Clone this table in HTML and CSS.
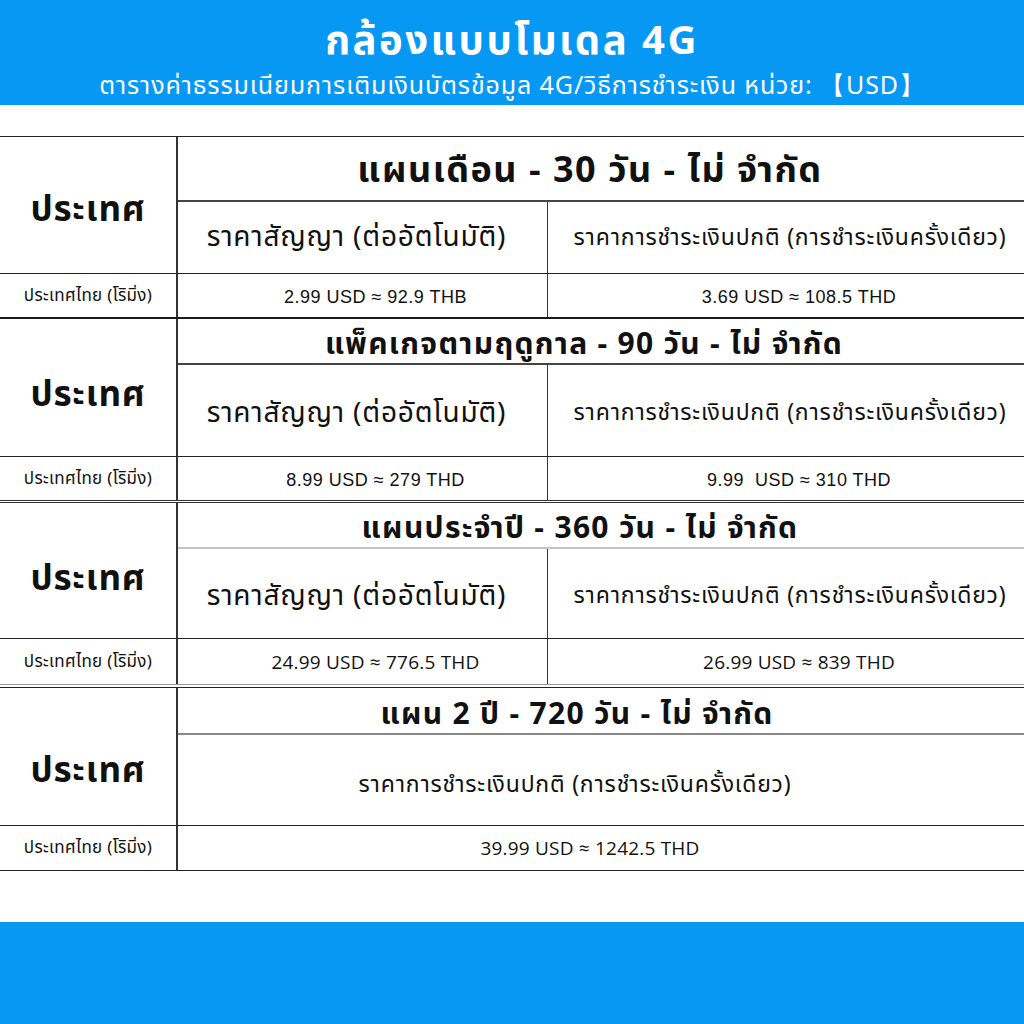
FILE: index.html
```html
<!DOCTYPE html>
<html lang="th">
<head>
<meta charset="utf-8">
<link rel="stylesheet" href="styles.css">
</head>
<body>
<header class="top">
  <h1 class="top-title">กล้องแบบโมเดล 4G</h1>
  <p class="top-sub">ตารางค่าธรรมเนียมการเติมเงินบัตรข้อมูล 4G/วิธีการชำระเงิน หน่วย: 【USD】</p>
</header>

<main class="tables">
  <section class="plan plan-1">
    <div class="country country-1">ประเทศ</div>
    <div class="title title-1">แผนเดือน - 30 วัน - ไม่ จำกัด</div>
    <div class="sub sub-a">ราคาสัญญา (ต่ออัตโนมัติ)</div>
    <div class="sub sub-b">ราคาการชำระเงินปกติ (การชำระเงินครั้งเดียว)</div>
    <div class="label">ประเทศไทย (โริมิ่ง)</div>
    <div class="price price-a">2.99 USD ≈ 92.9 THB</div>
    <div class="price">3.69 USD ≈ 108.5 THD</div>
  </section>

  <section class="plan plan-2">
    <div class="country country-2">ประเทศ</div>
    <div class="title title-2">แพ็คเกจตามฤดูกาล - 90 วัน - ไม่ จำกัด</div>
    <div class="sub sub-a sub-low">ราคาสัญญา (ต่ออัตโนมัติ)</div>
    <div class="sub sub-b sub-low">ราคาการชำระเงินปกติ (การชำระเงินครั้งเดียว)</div>
    <div class="label">ประเทศไทย (โริมิ่ง)</div>
    <div class="price price-a">8.99 USD ≈ 279 THD</div>
    <div class="price">9.99&nbsp; USD ≈ 310 THD</div>
  </section>

  <section class="plan plan-3">
    <div class="country country-3">ประเทศ</div>
    <div class="title title-3 title-light">แผนประจำปี - 360 วัน - ไม่ จำกัด</div>
    <div class="sub sub-a sub-low">ราคาสัญญา (ต่ออัตโนมัติ)</div>
    <div class="sub sub-b sub-low">ราคาการชำระเงินปกติ (การชำระเงินครั้งเดียว)</div>
    <div class="label">ประเทศไทย (โริมิ่ง)</div>
    <div class="price price-a price-alt">24.99 USD ≈ 776.5 THD</div>
    <div class="price price-alt">26.99 USD ≈ 839 THD</div>
  </section>

  <section class="plan plan-4">
    <div class="country country-4">ประเทศ</div>
    <div class="title title-4 title-mid">แผน 2 ปี - 720 วัน - ไม่ จำกัด</div>
    <div class="sub sub-wide">ราคาการชำระเงินปกติ (การชำระเงินครั้งเดียว)</div>
    <div class="label">ประเทศไทย (โริมิ่ง)</div>
    <div class="price price-wide price-alt">39.99 USD ≈ 1242.5 THD</div>
  </section>
</main>

<footer class="bottom"></footer>
</body>
</html>
```

FILE: styles.css
```css
* { box-sizing: border-box; }

html, body {
  margin: 0;
  padding: 0;
  background: #ffffff;
  width: 1024px;
  height: 1024px;
  overflow: hidden;
  font-family: "Noto Sans Thai", "Noto Sans", "DejaVu Sans", sans-serif;
  color: #111;
}

.top {
  height: 105px;
  background: #0798f4;
  color: #fff;
  display: flex;
  flex-direction: column;
  align-items: center;
  padding-top: 20px;
}

.top-title {
  margin: 0;
  font-size: 40px;
  line-height: 44px;
  font-weight: 700;
  letter-spacing: 2.5px;
}

.top-sub {
  margin: 4px 0 0;
  font-size: 25px;
  line-height: 36px;
  font-weight: 400;
  letter-spacing: 0.9px;
}

.tables {
  margin-top: 31px;
}

.plan {
  display: grid;
  grid-template-columns: 178px 370px 476px;
}

.plan-1 {
  grid-template-rows: 65px 71px 44px;
  border-top: 1px solid #222;
  border-bottom: 2px solid #1a1a1a;
}

.plan-2 {
  grid-template-rows: 46px 91px 44px;
  border-bottom: 3px double #333;
}

.plan-3 {
  grid-template-rows: 46px 89px 46px;
  border-bottom: 1px solid #999;
}

.plan-4 {
  grid-template-rows: 47px 90px 45px;
  margin-top: 2px;
  border-top: 1px solid #222;
  border-bottom: 1px solid #222;
}

.country {
  grid-row: 1 / 3;
  grid-column: 1;
  border-right: 2px solid #333;
  display: flex;
  align-items: center;
  justify-content: center;
  font-size: 35px;
  font-weight: 700;
  letter-spacing: 0.8px;
}

.country-1 { padding-top: 10px; }
.country-2 { padding-top: 16px; }
.country-3 { padding-top: 18px; }
.country-4 { padding-top: 30px; }

.title {
  grid-row: 1;
  grid-column: 2 / 4;
  border-bottom: 2px solid #444;
  display: flex;
  align-items: center;
  justify-content: center;
  font-size: 30px;
  font-weight: 700;
  letter-spacing: 1.3px;
  white-space: nowrap;
  padding-top: 8px;
}

.title-1 {
  font-size: 36px;
  letter-spacing: 1.5px;
  padding-right: 22px;
  padding-top: 4px;
}

.title-2 { padding-right: 34px; }
.title-3 { padding-right: 42px; }
.title-4 { padding-right: 48px; }

.title-light { border-bottom-color: #c4c4c4; }
.title-mid { border-bottom-color: #888; }

.sub {
  grid-row: 2;
  display: flex;
  align-items: center;
  justify-content: center;
  font-weight: 400;
  white-space: nowrap;
}

.sub-low { padding-top: 5px; }

.sub-a {
  grid-column: 2;
  border-right: 1px solid #333;
  font-size: 28px;
  letter-spacing: 0.8px;
  padding-right: 12px;
}

.sub-b {
  grid-column: 3;
  font-size: 23px;
  letter-spacing: 0.8px;
  padding-left: 8px;
}

.sub-wide {
  grid-column: 2 / 4;
  font-size: 23px;
  letter-spacing: 0.8px;
  padding-right: 52px;
  padding-top: 10px;
}

.label {
  grid-row: 3;
  grid-column: 1;
  border-top: 1px solid #222;
  border-right: 2px solid #333;
  display: flex;
  align-items: center;
  justify-content: center;
  font-size: 17px;
  letter-spacing: 0.3px;
  white-space: nowrap;
}

.price {
  grid-row: 3;
  border-top: 1px solid #222;
  display: flex;
  align-items: center;
  justify-content: center;
  font-family: "Liberation Sans", Arial, sans-serif;
  font-size: 18px;
  letter-spacing: 0.5px;
  padding-left: 26px;
  padding-top: 3px;
  white-space: nowrap;
}

.price-a {
  grid-column: 2;
  border-right: 1px solid #333;
}

.price-alt {
  font-family: "Open Sans", "Noto Sans", sans-serif;
  font-size: 19px;
  letter-spacing: 0.2px;
  padding-top: 0;
}

.price-wide {
  grid-column: 2 / 4;
  padding-left: 0;
  padding-right: 22px;
}

.bottom {
  height: 102px;
  background: #0798f4;
  margin-top: 51px;
}
```
